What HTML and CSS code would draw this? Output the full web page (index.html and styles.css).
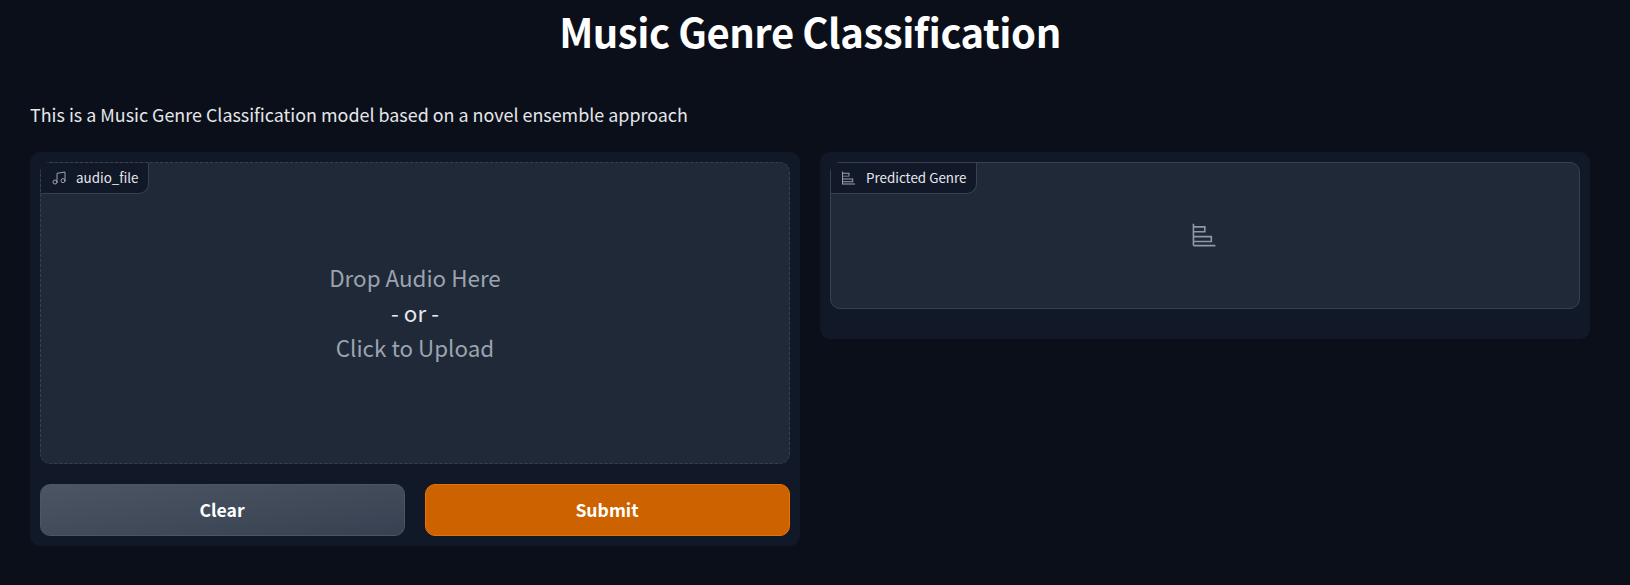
FILE: index.html
```html
<!DOCTYPE html>
<html lang="en">
<head>
<meta charset="utf-8">
<title>Music Genre Classification</title>
<link rel="stylesheet" href="styles.css">
</head>
<body>
<main class="app">
  <h1 class="title">Music Genre Classification</h1>
  <p class="description">This is a Music Genre Classification model based on a novel ensemble approach</p>
  <div class="columns">
    <section class="panel">
      <div class="block block-upload">
        <div class="label">
          <svg class="label-icon" viewBox="1.5 1.5 21 21" fill="none" stroke="currentColor" stroke-width="1.5" stroke-linecap="round" stroke-linejoin="round"><path d="M9 18V5l12-2v13"/><circle cx="6" cy="18" r="3"/><circle cx="18" cy="16" r="3"/></svg>
          <span>audio_file</span>
        </div>
        <div class="drop">
          <span>Drop Audio Here</span>
          <span class="or">- or -</span>
          <span>Click to Upload</span>
        </div>
      </div>
      <div class="buttons">
        <button class="btn btn-secondary">Clear</button>
        <button class="btn btn-primary">Submit</button>
      </div>
    </section>
    <section class="panel">
      <div class="block block-result">
        <div class="label">
          <svg class="label-icon" viewBox="2 1 30 30"><path fill="currentColor" d="M4 2H2v28h28v-2H4v-3h22v-8H4v-4h14V5H4Zm20 17v4H4v-4ZM16 7v4H4V7Z"/></svg>
          <span>Predicted Genre</span>
        </div>
        <svg class="empty-icon" viewBox="0 0 32 32"><path fill="currentColor" d="M4 2H2v26a2 2 0 0 0 2 2h26v-2H4v-3h22v-8H4v-4h14V5H4Zm20 17v4H4v-4ZM16 7v4H4V7Z"/></svg>
      </div>
    </section>
  </div>
</main>
</body>
</html>
```
FILE: styles.css
```css
* { box-sizing: border-box; }
body {
  margin: 0;
  background: #0b0f19;
  color: #f3f4f6;
  font-family: "Noto Sans CJK SC", "Noto Sans", sans-serif;
}
.app {
  height: 585px;
  padding: 0 40px 0 30px;
  overflow: hidden;
}
.title {
  margin: 0;
  padding-top: 1px;
  height: 99px;
  font-size: 40px;
  line-height: 60px;
  font-weight: 700;
  letter-spacing: -0.45px;
  font-feature-settings: "liga" 1;
  text-align: center;
  color: #fff;
}
.description {
  margin: 0;
  height: 53px;
  font-size: 17.9px;
  line-height: 30px;
  color: #e5e7eb;
}
.columns {
  display: grid;
  grid-template-columns: 1fr 1fr;
  gap: 20px;
  align-items: start;
}
.panel {
  display: flex;
  flex-direction: column;
  gap: 20px;
  padding: 10px;
  border-radius: 10px;
  background: #111827;
}
.block {
  position: relative;
  display: flex;
  align-items: center;
  justify-content: center;
  border: 1px solid #374151;
  border-radius: 10px;
  background: #1f2937;
}
.block-upload { height: 302px; border-style: dashed; }
.block-result { height: 147px; margin-bottom: 20px; }
.label {
  position: absolute;
  top: 0;
  left: 0;
  display: flex;
  align-items: center;
  gap: 10px;
  height: 31px;
  padding: 0 9.5px 0 11px;
  border: 1px solid #374151;
  border-width: 0 1px 1px 0;
  border-radius: 0 0 10px 0;
  background: #111827;
  color: #e5e7eb;
  font-size: 13.4px;
  line-height: 20px;
}
.label span { padding-bottom: 2px; }
.label-icon { width: 14px; height: 14px; color: #9ca3af; }
.drop {
  display: flex;
  flex-direction: column;
  align-items: center;
  padding-bottom: 1px;
  font-size: 22.4px;
  line-height: 35px;
  color: #9ca3af;
}
.or { color: #e5e7eb; }
.empty-icon { width: 26px; height: 26px; margin: 0 2px 2px 0; color: #9298a3; }
.buttons { display: flex; gap: 20px; }
.btn {
  flex: 1;
  height: 52px;
  padding: 0 1px 0 0;
  border: 1px solid #4b5563;
  border-radius: 10px;
  color: #fff;
  font-family: inherit;
  font-size: 17.6px;
  font-weight: 700;
  line-height: 30px;
}
.btn-secondary { background: linear-gradient(to bottom right, #4b5563, #374151); }
.btn-primary { background: #cc6300; border-color: #ea7300; }
```
